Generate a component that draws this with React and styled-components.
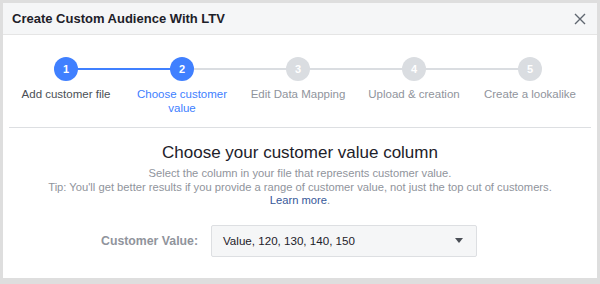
import React from 'react';
import styled, { createGlobalStyle } from 'styled-components';

const GlobalStyle = createGlobalStyle`
  html, body {
    margin: 0;
    padding: 0;
    background: #dedede;
    font-family: "Liberation Sans", Arial, Helvetica, sans-serif;
  }
  * { box-sizing: border-box; }
`;

const Page = styled.div`
  width: 600px;
  height: 284px;
  padding: 3px 3px 6px 3px;
  background: #dedede;
`;

const Dialog = styled.div`
  width: 594px;
  height: 275px;
  background: #fff;
  display: flex;
  flex-direction: column;
  overflow: hidden;
`;

const Header = styled.div`
  height: 32px;
  flex: none;
  display: flex;
  align-items: center;
  justify-content: space-between;
  padding: 0 10px 0 9px;
  background: #f5f6f7;
  border-bottom: 1px solid #e5e5e5;
`;

const Title = styled.h1`
  margin: 0;
  font-size: 13px;
  font-weight: bold;
  color: #1d2129;
`;

const Close = styled.button`
  border: 0;
  background: none;
  padding: 0;
  width: 14px;
  height: 14px;
  display: flex;
  align-items: center;
  justify-content: center;
  cursor: pointer;
`;

const Stepper = styled.ol`
  list-style: none;
  margin: 0;
  padding: 22px 9px 0 5px;
  display: grid;
  grid-template-columns: repeat(5, 116px);
  height: 92px;
`;

const Step = styled.li`
  position: relative;
  display: flex;
  flex-direction: column;
  align-items: center;
  text-align: center;
  &:not(:first-child)::before {
    content: "";
    position: absolute;
    z-index: 0;
    top: 11px;
    left: -50%;
    width: 100%;
    height: 2px;
    background: ${p => (p.$done ? '#4080ff' : '#dadde1')};
  }
`;

const Circle = styled.span`
  position: relative;
  z-index: 1;
  width: 24px;
  height: 24px;
  border-radius: 50%;
  background: ${p => (p.$on ? '#4080ff' : '#dadde1')};
  color: #fff;
  font-size: 11px;
  font-weight: bold;
  display: flex;
  align-items: center;
  justify-content: center;
`;

const StepLabel = styled.span`
  margin-top: 6px;
  font-size: 11.5px;
  line-height: 14px;
  width: 100px;
  color: ${p => (p.$active ? '#4080ff' : p.$muted ? '#90949c' : '#4b4f56')};
`;

const Divider = styled.hr`
  margin: 0 6px;
  border: 0;
  border-top: 1px solid #dddfe2;
`;

const Body = styled.div`
  display: flex;
  flex-direction: column;
  align-items: center;
  text-align: center;
  padding-top: 14px;
`;

const Heading = styled.h2`
  margin: 0;
  font-size: 17px;
  line-height: 22px;
  font-weight: normal;
  color: #1d2129;
`;

const Help = styled.p`
  margin: 3px 0 0;
  font-size: 11.2px;
  line-height: 13.5px;
  color: #90949c;
`;

const LearnMore = styled.a`
  color: #365899;
  text-decoration: none;
`;

const Field = styled.div`
  display: flex;
  align-items: center;
  margin-top: 17px;
  padding-left: 98px;
`;

const FieldLabel = styled.label`
  width: 110px;
  font-size: 12.3px;
  font-weight: bold;
  color: #90949c;
`;

const Select = styled.div`
  width: 266px;
  height: 32px;
  display: flex;
  align-items: center;
  justify-content: space-between;
  padding: 0 13px 0 11px;
  background: #f5f6f7;
  border: 1px solid #dddfe2;
  border-radius: 2px;
  font-size: 11.6px;
  color: #1d2129;
`;

const steps = [
  { n: 1, label: 'Add customer file' },
  { n: 2, label: 'Choose customer value' },
  { n: 3, label: 'Edit Data Mapping' },
  { n: 4, label: 'Upload & creation' },
  { n: 5, label: 'Create a lookalike' },
];
const current = 2;

export default function App() {
  return (
    <Page>
      <GlobalStyle />
      <Dialog>
        <Header>
          <Title>Create Custom Audience With LTV</Title>
          <Close aria-label="Close">
            <svg width="12" height="12" viewBox="0 0 12 12">
              <path d="M1 1L11 11M11 1L1 11" stroke="#606770" strokeWidth="1.4" />
            </svg>
          </Close>
        </Header>
        <Stepper>
          {steps.map(s => (
            <Step key={s.n} $done={s.n <= current}>
              <Circle $on={s.n <= current}>{s.n}</Circle>
              <StepLabel $active={s.n === current} $muted={s.n > current}>
                {s.label}
              </StepLabel>
            </Step>
          ))}
        </Stepper>
        <Divider />
        <Body>
          <Heading>Choose your customer value column</Heading>
          <Help>
            Select the column in your file that represents customer value.
            <br />
            Tip: You'll get better results if you provide a range of customer value, not just the top cut of customers.
            <br />
            <LearnMore href="#">Learn more</LearnMore>.
          </Help>
        </Body>
        <Field>
          <FieldLabel>Customer Value:</FieldLabel>
          <Select>
            <span>Value, 120, 130, 140, 150</span>
            <svg width="8" height="5" viewBox="0 0 8 5">
              <path d="M0 0H8L4 5Z" fill="#4b4f56" />
            </svg>
          </Select>
        </Field>
      </Dialog>
    </Page>
  );
}
